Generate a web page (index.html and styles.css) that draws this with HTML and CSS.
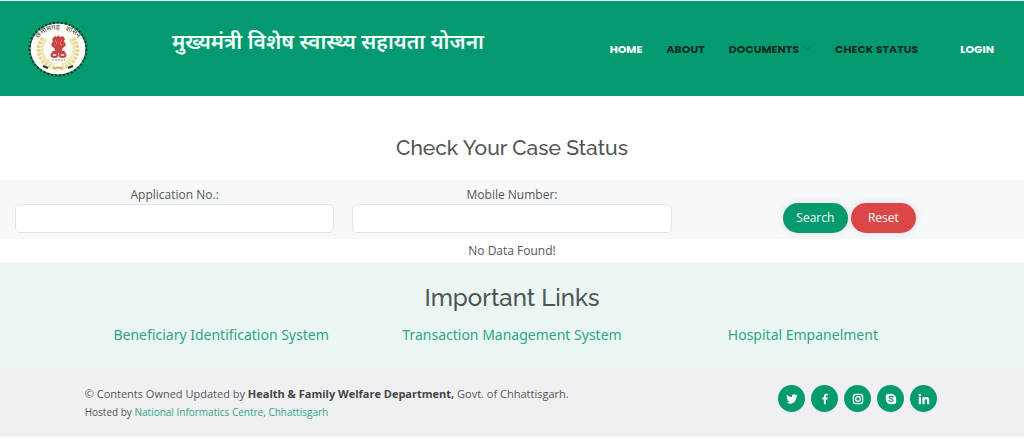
FILE: index.html
```html
<!DOCTYPE html>
<html lang="en">
<head>
    <meta charset="UTF-8">
    <meta name="viewport" content="width=device-width, initial-scale=1.0">
    <title>Check Your Case Status</title>
    <link rel="stylesheet" href="styles.css">
</head>
<body>
    <header class="header">
        <a href="#" class="logo" aria-label="Home">
            <svg viewBox="0 0 60 56">
                <ellipse cx="30" cy="28" rx="28" ry="26" fill="#fdfdf6"/>
                <ellipse cx="30" cy="28" rx="28" ry="26" fill="none" stroke="#2c6a4a" stroke-width="1"/>
                <ellipse cx="30" cy="28" rx="28.5" ry="26.5" fill="none" stroke="#0b3c28" stroke-width="2" stroke-dasharray="2 2"/>
                <path id="arc" d="M9 19 C17 5 43 5 51 19" fill="none"/>
                <text class="seal-text"><textPath href="#arc" startOffset="50%" text-anchor="middle">छत्तीसगढ़ &#160; शासन</textPath></text>
                <g fill="none" stroke="#e6d894">
                    <path d="M15 17 C6 28 11 43 27 47" stroke-width="4" stroke-dasharray="3 1"/>
                    <path d="M45 17 C54 28 49 43 33 47" stroke-width="4" stroke-dasharray="3 1"/>
                    <path d="M18 18 C10 28 15 39 26 44" stroke="#f0e8bc" stroke-width="3"/>
                    <path d="M42 18 C50 28 45 39 34 44" stroke="#f0e8bc" stroke-width="3"/>
                </g>
                <!-- lion capital -->
                <g fill="#ca4344">
                    <path d="M25 17 L27 15 L29 16 L30 14 L32 16 L35 15 L37 18 L36 20 L38 24 L35 27 H26 L23 24 L25 20 L24 19 Z"/>
                    <path d="M26 25 H35 L34 30 H27 Z"/>
                    <path d="M24 30 H37 L36 32 H25 Z"/>
                </g>
                <path d="M27 19 L29 22 L27 25 M34 19 L32 22 L34 25" fill="none" stroke="#e07f7c"/>
                <g fill="#f5d0cb" stroke="#ca4344" stroke-width="2">
                    <ellipse cx="26.500" cy="34" rx="3" ry="2"/>
                    <ellipse cx="34.500" cy="34" rx="3" ry="2"/>
                </g>
                <path d="M24 39 H37" stroke="#888" stroke-dasharray="2 1"/>
                <path d="M15 45 L20 47 M40 47 L45 45" stroke="#243c2b" stroke-width="2"/>
                <path d="M26 48 Q30 45 34 48" fill="none" stroke="#c8aa50" stroke-width="2"/>
            </svg>
        </a>
        <h1 class="site-title" lang="hi">मुख्यमंत्री विशेष स्वास्थ्य सहायता योजना</h1>
        <nav class="navbar">
            <a href="#" class="active">HOME</a>
            <a href="#">ABOUT</a>
            <a href="#">DOCUMENTS
                <svg class="chevron" viewBox="0 0 8 8"><path d="M1 2 L4 5 L7 2"/></svg>
            </a>
            <a href="#">CHECK STATUS</a>
            <a href="#" class="login">LOGIN</a>
        </nav>
    </header>

    <main>
        <h2 class="page-title">Check Your Case Status</h2>
        <form class="search-form">
            <div class="field">
                <label for="applicationNo">Application No.:</label>
                <input type="text" id="applicationNo">
            </div>
            <div class="field">
                <label for="mobileNumber">Mobile Number:</label>
                <input type="text" id="mobileNumber">
            </div>
            <div class="buttons">
                <button type="button" class="btn btn-search">Search</button>
                <button type="reset" class="btn btn-reset">Reset</button>
            </div>
        </form>
        <p class="result">No Data Found!</p>

        <section class="links">
            <h2>Important Links</h2>
            <div class="container links-row">
                <a href="#">Beneficiary Identification System</a>
                <a href="#">Transaction Management System</a>
                <a href="#">Hospital Empanelment</a>
            </div>
        </section>
    </main>

    <footer class="footer">
        <div class="container footer-row">
            <div class="copyright">
                <p>© Contents Owned Updated by <strong>Health &amp; Family Welfare Department,</strong> Govt. of Chhattisgarh.</p>
                <p class="credits">Hosted by <a href="#">National Informatics Centre, Chhattisgarh</a></p>
            </div>
            <div class="social">
                <a href="#" aria-label="Twitter">
                    <svg viewBox="0 0 24 24"><path d="M19.633 7.997c.013.175.013.349.013.523 0 5.325-4.053 11.461-11.46 11.461-2.282 0-4.402-.661-6.186-1.809.324.037.636.05.973.05a8.07 8.07 0 0 0 5.001-1.721 4.036 4.036 0 0 1-3.767-2.793c.249.037.499.062.761.062.361 0 .724-.05 1.061-.137a4.027 4.027 0 0 1-3.23-3.953v-.05c.537.299 1.16.486 1.82.511a4.022 4.022 0 0 1-1.796-3.354c0-.748.199-1.434.548-2.032a11.457 11.457 0 0 0 8.306 4.215c-.062-.3-.1-.611-.1-.923a4.026 4.026 0 0 1 4.028-4.028c1.16 0 2.207.486 2.943 1.272a7.957 7.957 0 0 0 2.556-.973 4.02 4.02 0 0 1-1.771 2.22 8.073 8.073 0 0 0 2.319-.624 8.645 8.645 0 0 1-2.019 2.083z"/></svg>
                </a>
                <a href="#" aria-label="Facebook">
                    <svg viewBox="0 0 24 24"><path d="M13.397 20.997v-8.196h2.765l.411-3.209h-3.176V7.548c0-.926.258-1.56 1.587-1.56h1.684V3.127A22.336 22.336 0 0 0 14.201 3c-2.444 0-4.122 1.492-4.122 4.231v2.355H7.332v3.209h2.753v8.202h3.312z"/></svg>
                </a>
                <a href="#" aria-label="Instagram">
                    <svg viewBox="0 0 24 24">
                        <rect x="4" y="4" width="16" height="16" rx="4" fill="none" stroke="#fff" stroke-width="2"/>
                        <circle cx="12" cy="12" r="4" fill="none" stroke="#fff" stroke-width="2"/>
                        <circle cx="17" cy="7" r="1"/>
                    </svg>
                </a>
                <a href="#" aria-label="Skype">
                    <svg viewBox="0 0 24 24">
                        <circle cx="8" cy="8" r="5"/>
                        <circle cx="16" cy="16" r="5"/>
                        <circle cx="12" cy="12" r="9"/>
                        <path d="M15.500 9 C14.500 7 9 7 9 9.500 C9 12.500 15.500 11 15.500 14 C15.500 17 10 17 8.500 14.500" fill="none" stroke="#049a70" stroke-width="2" stroke-linecap="round"/>
                    </svg>
                </a>
                <a href="#" aria-label="LinkedIn">
                    <svg viewBox="0 0 24 24"><circle cx="4.983" cy="5.009" r="2.188"/><path d="M9.237 8.855v12.139h3.769v-6.003c0-1.584.298-3.118 2.262-3.118 1.937 0 1.961 1.811 1.961 3.218v5.904H21v-6.657c0-3.27-.704-5.783-4.526-5.783-1.835 0-3.065 1.007-3.568 1.96h-.051v-1.66H9.237zm-6.142 0H6.87v12.139H3.095z"/></svg>
                </a>
            </div>
        </div>
    </footer>
</body>
</html>
```
FILE: styles.css
```css
* {
    box-sizing: border-box;
}

body {
    margin: 0;
    background-color: #ffffff;
    color: #555555;
    font-family: "Open Sans", sans-serif;
    font-size: 12px;
    line-height: 18px;
}

a {
    color: #2fa584;
    text-decoration: none;
}

h1, h2, p {
    margin: 0;
}

h2 {
    color: #4f5453;
    font-family: "Raleway", "Lato", sans-serif;
    font-weight: 500;
    text-align: center;
}

/* Header */
.header {
    display: flex;
    align-items: center;
    height: 96px;
    padding: 0 30px 0 28px;
    background-color: #049a70;
    border-top: 1px solid #e6f7f3;
}

.logo svg {
    display: block;
    width: 60px;
    height: 58px;
}

.seal-text {
    font-family: "Noto Sans", sans-serif;
    font-size: 7px;
    fill: #333333;
}

.site-title {
    margin-left: 84px;
    padding-bottom: 16px;
    color: #effffa;
    font-family: "Noto Sans", "Noto Sans Devanagari", sans-serif;
    font-size: 21px;
    font-weight: 600;
    line-height: 28px;
    white-space: nowrap;
}

.navbar {
    display: flex;
    gap: 24px;
    margin-left: auto;
    font-family: "Poppins", "Inter", sans-serif;
    font-size: 11px;
    font-weight: 700;
    white-space: nowrap;
}

.navbar a {
    display: flex;
    align-items: center;
    gap: 4px;
    color: #082b20;
}

.navbar .active,
.navbar .login {
    color: #ffffff;
}

.navbar .login {
    margin-left: 18px;
}

.chevron {
    width: 8px;
    height: 8px;
    fill: none;
    stroke: #087353;
}

/* Search form */
.page-title {
    padding: 37px 0 17px;
    font-size: 21px;
    line-height: 30px;
}

.search-form {
    display: grid;
    grid-template-columns: repeat(3, 1fr);
    gap: 18px;
    padding: 6px 15px;
    background-color: #f7f8fa;
}

.field {
    text-align: center;
}

.field label {
    display: block;
}

.field input {
    display: block;
    width: 100%;
    height: 29px;
    border: 1px solid #e1e5e8;
    border-radius: 5px;
    background-color: #ffffff;
    padding: 4px 10px;
    font: inherit;
}

.buttons {
    display: flex;
    justify-content: center;
    align-items: flex-end;
    gap: 3px;
}

.btn {
    width: 65px;
    height: 30px;
    border: none;
    border-radius: 15px;
    box-shadow: 0 0 8px rgba(0, 0, 0, 0.1);
    color: #ffffff;
    font: inherit;
    cursor: pointer;
}

.btn-search {
    background-color: #049a70;
}

.btn-reset {
    background-color: #db4646;
}

.result {
    padding: 3px 0;
    text-align: center;
}

/* Important links */
.container {
    width: 86%;
    margin: 0 auto;
}

.links {
    padding: 20px 0 23px;
    background-color: #eaf6f4;
}

.links h2 {
    font-size: 24px;
    line-height: 30px;
}

.links-row {
    display: grid;
    grid-template-columns: repeat(3, 1fr);
    padding: 11px 4px 0;
    font-family: "Noto Sans", "Open Sans", sans-serif;
    font-size: 14px;
    line-height: 22px;
    text-align: center;
}

/* Footer */
.footer {
    padding: 16px 0;
    background-color: #f0f0f2;
}

.footer-row {
    display: flex;
    justify-content: space-between;
    padding: 0 15px 0 13px;
}

.copyright {
    font-size: 11px;
}

.copyright strong {
    color: #444444;
}

.credits {
    font-size: 10px;
}

.social {
    display: flex;
    gap: 6px;
}

.social a {
    display: flex;
    align-items: center;
    justify-content: center;
    width: 27px;
    height: 27px;
    border-radius: 50%;
    background-color: #049a70;
}

.social svg {
    width: 14px;
    height: 14px;
    fill: #ffffff;
}
```
